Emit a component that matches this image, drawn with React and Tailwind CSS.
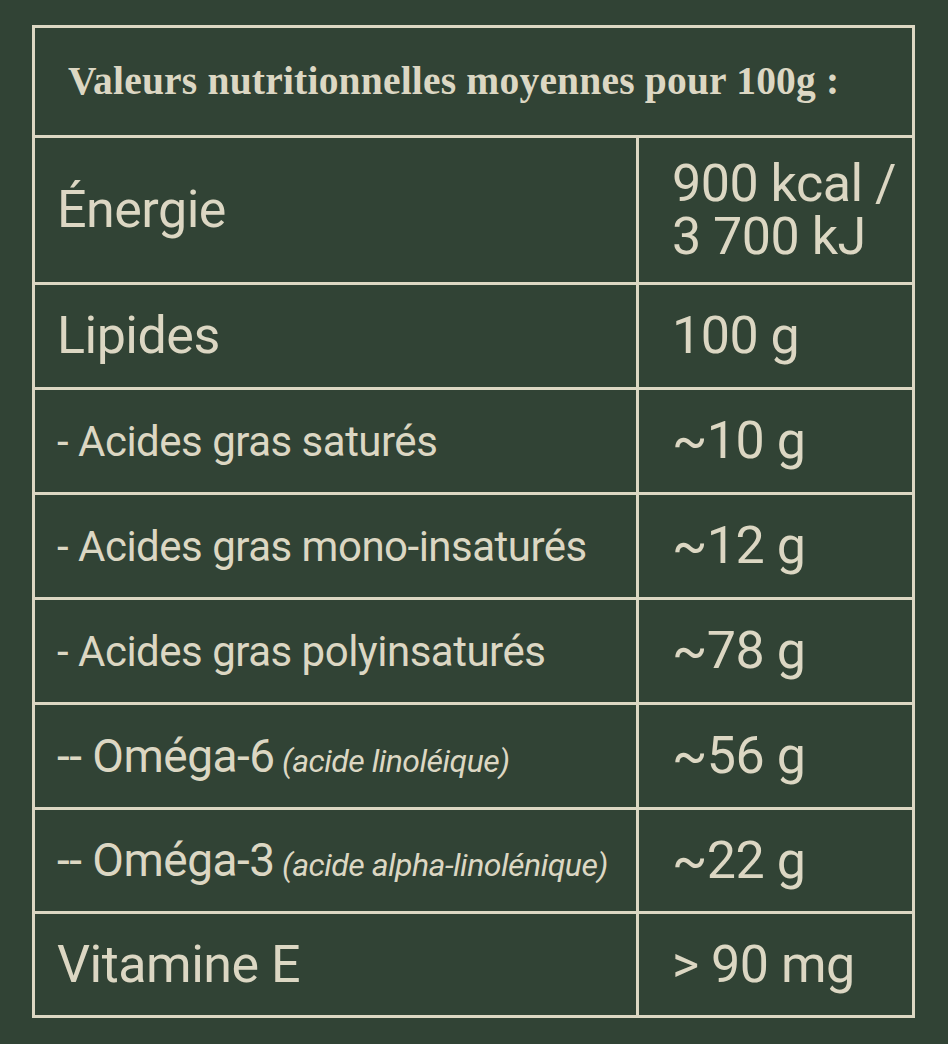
import React from "react";

const rows = [
  { label: "Lipides", value: "100 g", size: "text-[52px]", h: "h-[105px]" },
  { label: "- Acides gras saturés", value: "~10 g", size: "text-[42px]", h: "h-[105px]" },
  { label: "- Acides gras mono-insaturés", value: "~12 g", size: "text-[42px]", h: "h-[105px]" },
  { label: "- Acides gras polyinsaturés", value: "~78 g", size: "text-[42px]", h: "h-[105px]" },
  { label: "-- Oméga-6", note: "(acide linoléique)", value: "~56 g", size: "text-[46px]", h: "h-[105px]" },
  { label: "-- Oméga-3", note: "(acide alpha-linolénique)", value: "~22 g", size: "text-[46px]", h: "h-[104px]" },
  { label: "Vitamine E", value: "> 90 mg", size: "text-[52px]", h: "h-[101px]", last: true },
];

export default function App() {
  return (
    <div className="min-h-screen w-[948px] h-[1044px] bg-[#314335] text-[#dcd7c3] pt-[25px] pl-[32px] font-['Roboto',sans-serif]">
      <div className="w-[883px] border-[3px] border-[#dcd7c3]">
        <div className="h-[110px] flex items-center pl-[33px] border-b-[3px] border-[#dcd7c3]">
          <h1 className="font-['Liberation_Serif',serif] font-bold text-[39.5px] tracking-[0.2px]">
            Valeurs nutritionnelles moyennes pour 100g :
          </h1>
        </div>

        <div className="flex h-[147px] border-b-[3px] border-[#dcd7c3]">
          <div className="w-[604px] border-r-[3px] border-[#dcd7c3] flex items-center pl-[22px] text-[52px] tracking-[-0.5px]">
            Énergie
          </div>
          <div className="flex-1 flex items-center pl-[33px] text-[52px] leading-[53px] tracking-[-0.5px]">
            <span>
              900 kcal /<br />3 700 kJ
            </span>
          </div>
        </div>

        {rows.map((row, i) => (
          <div
            key={i}
            className={`flex ${row.h} ${row.last ? "" : "border-b-[3px] border-[#dcd7c3]"}`}
          >
            <div
              className={`w-[604px] border-r-[3px] border-[#dcd7c3] flex items-center pl-[22px] tracking-[-0.5px] whitespace-nowrap ${row.size}`}
            >
              <span>
                {row.label}
                {row.note && (
                  <span className="italic text-[32px] tracking-[-0.5px]"> {row.note}</span>
                )}
              </span>
            </div>
            <div className="flex-1 flex items-center pl-[33px] text-[52px] tracking-[-0.5px]">
              {row.value}
            </div>
          </div>
        ))}
      </div>
    </div>
  );
}
